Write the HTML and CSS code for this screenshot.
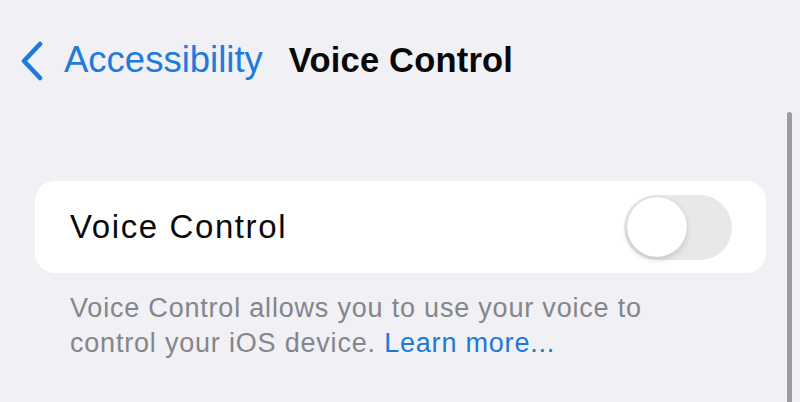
FILE: index.html
```html
<!DOCTYPE html>
<html lang="en">
<head>
<meta charset="utf-8">
<title>Voice Control</title>
<link rel="stylesheet" href="styles.css">
</head>
<body>
<div class="screen">
  <header class="nav">
    <a class="back" href="#">
      <svg class="chevron" width="24" height="40" viewBox="0 0 24 40" aria-hidden="true">
        <polyline points="20,3 4,20 20,37" fill="none" stroke="currentColor" stroke-width="4.6" stroke-linecap="round" stroke-linejoin="round"/>
      </svg>
      <span class="back-label">Accessibility</span>
    </a>
    <h1 class="title">Voice Control</h1>
  </header>

  <section class="group">
    <div class="card">
      <div class="row">
        <span class="row-label">Voice Control</span>
        <span class="switch" role="switch" aria-checked="false"><span class="knob"></span></span>
      </div>
    </div>
    <p class="footnote"><span class="footnote-text">Voice Control allows you to use your voice to control your iOS device.</span> <a class="link" href="#">Learn more...</a></p>
  </section>

  <div class="scroll-indicator"></div>
</div>
</body>
</html>
```

FILE: styles.css
```css
html, body {
  margin: 0;
  padding: 0;
}

body {
  background: #f0f0f5;
  font-family: "Liberation Sans", Arial, sans-serif;
  color: #0a0a0a;
}

.screen {
  position: relative;
  width: 800px;
  height: 402px;
  overflow: hidden;
}

.nav {
  display: flex;
  align-items: center;
  padding: 38px 0 0 20px;
  height: 44px;
}

.back {
  display: flex;
  align-items: center;
  color: #1d7bdc;
  text-decoration: none;
}

.chevron {
  display: block;
  margin-top: 1px;
}

.back-label {
  margin-left: 20px;
  font-size: 36.5px;
  line-height: 44px;
}

.title {
  margin: 0 0 0 26px;
  font-size: 34.5px;
  font-weight: bold;
  line-height: 44px;
  color: #080808;
  letter-spacing: 0.2px;
}

.group {
  margin: 99px 34px 0 35px;
}

.card {
  background: #ffffff;
  border-radius: 20px;
  height: 92px;
}

.row {
  display: flex;
  align-items: center;
  justify-content: space-between;
  height: 100%;
  padding: 0 34px 0 35px;
}

.row-label {
  font-size: 33px;
  letter-spacing: 1.6px;
  color: #0a0a0a;
}

.switch {
  position: relative;
  display: block;
  width: 108px;
  height: 65px;
  border-radius: 33px;
  background: #e8e8ea;
}

.knob {
  position: absolute;
  left: 3px;
  top: 2px;
  width: 60px;
  height: 60px;
  border-radius: 50%;
  background: #ffffff;
  box-shadow: 0 3px 6px rgba(0, 0, 0, 0.14), 0 0 1px rgba(0, 0, 0, 0.18);
}

.footnote {
  margin: 18px 0 0 35px;
  font-size: 27px;
  letter-spacing: 0.8px;
  line-height: 35px;
  color: #85858b;
  width: 610px;
}

.link {
  color: #1d78d6;
  text-decoration: none;
}

.scroll-indicator {
  position: absolute;
  left: 787px;
  top: 112px;
  width: 5px;
  height: 300px;
  border-radius: 3px;
  background: #9b9ba0;
}
```
